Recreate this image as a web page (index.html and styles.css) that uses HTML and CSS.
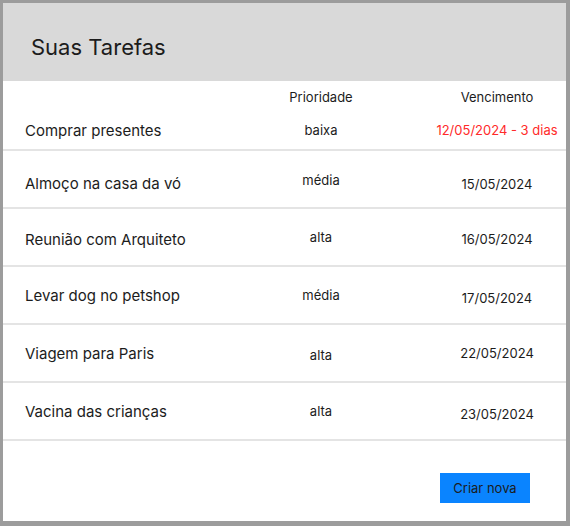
FILE: index.html
```html
<!DOCTYPE html>
<html lang="pt-BR">
<head>
<meta charset="utf-8">
<title>Suas Tarefas</title>
<link rel="stylesheet" href="styles.css">
</head>
<body>
<div class="card">
  <header class="card-header">
    <h1 class="title">Suas Tarefas</h1>
  </header>
  <div class="table">
    <div class="thead">
      <span></span>
      <span class="label">Prioridade</span>
      <span class="label date-col">Vencimento</span>
    </div>
    <div class="row row-first">
      <span class="name">Comprar presentes</span>
      <span class="prio">baixa</span>
      <span class="date date-col late">12/05/2024 - 3 dias</span>
    </div>
    <div class="row">
      <span class="name dn4">Almoço na casa da vó</span>
      <span class="prio dn1">média</span>
      <span class="date date-col dn5">15/05/2024</span>
    </div>
    <div class="row">
      <span class="name dn2">Reunião com Arquiteto</span>
      <span class="prio">alta</span>
      <span class="date date-col dn2">16/05/2024</span>
    </div>
    <div class="row">
      <span class="name">Levar dog no petshop</span>
      <span class="prio">média</span>
      <span class="date date-col dn3">17/05/2024</span>
    </div>
    <div class="row">
      <span class="name">Viagem para Paris</span>
      <span class="prio dn2">alta</span>
      <span class="date date-col">22/05/2024</span>
    </div>
    <div class="row">
      <span class="name">Vacina das crianças</span>
      <span class="prio">alta</span>
      <span class="date date-col dn3">23/05/2024</span>
    </div>
  </div>
  <footer class="card-footer">
    <button class="btn-primary" type="button">Criar nova</button>
  </footer>
</div>
</body>
</html>
```

FILE: styles.css
```css
* { box-sizing: border-box; }

html, body {
  margin: 0;
  height: 100%;
}

body {
  background: #9c9c9c;
  padding: 3px 4px 5px 3px;
  font-family: Inter, "Noto Sans", sans-serif;
  color: #1c1c1c;
}

.card {
  background: #ffffff;
  height: 518px;
  display: flex;
  flex-direction: column;
}

.card-header {
  background: #d9d9d9;
  height: 78px;
  display: flex;
  align-items: center;
  padding: 10px 0 0 28px;
}

.title {
  margin: 0;
  font-size: 22px;
  font-weight: 400;
  letter-spacing: 0;
}

.thead,
.row {
  display: grid;
  grid-template-columns: 258px 120px 1fr;
  align-items: center;
}

.thead {
  height: 30px;
  padding-top: 2px;
}

.row {
  height: 58px;
  border-bottom: 2px solid #e4e4e4;
}

.row-first {
  height: 40px;
}

.label {
  font-size: 13px;
  text-align: center;
}

.name {
  font-size: 15px;
  padding-left: 22px;
}

.prio {
  font-size: 13px;
  text-align: center;
}

.date {
  font-size: 13px;
}

.date-col {
  text-align: center;
  padding-left: 47px;
}

.late {
  color: #ff2a2a;
}

.dn1 { margin-top: 2px; }
.dn2 { margin-top: 4px; }
.dn3 { margin-top: 6px; }
.dn4 { margin-top: 8px; }
.dn5 { margin-top: 10px; }

.card-footer {
  display: flex;
  justify-content: flex-end;
  padding: 32px 36px 0 0;
}

.btn-primary {
  width: 90px;
  height: 30px;
  border: 0;
  border-radius: 0;
  background: #0a84ff;
  color: #1c1c1c;
  font-family: Inter, "Noto Sans", sans-serif;
  font-size: 13px;
  padding: 0;
}
```
